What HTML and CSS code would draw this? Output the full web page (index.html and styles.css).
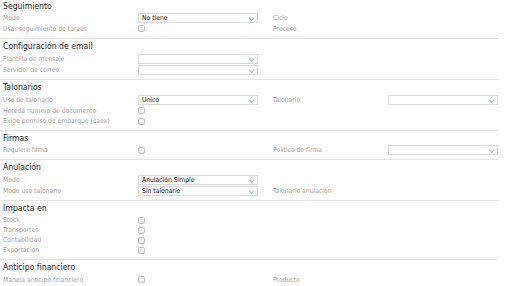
FILE: index.html
```html
<!DOCTYPE html>
<html lang="es">

<head>
    <meta charset="UTF-8" />
    <title>Configuración de documento</title>
    <link rel="stylesheet" href="styles.css">
</head>

<body>
    <div class="form">
        <!-- Seguimiento -->
        <div class="section first">
            <div class="section-title">Seguimiento</div>
            <div class="row">
                <span class="label">Modo</span>
                <div class="select">No tiene<span class="chevron"></span></div>
                <span></span>
                <span class="label">Ciclo</span>
            </div>
            <div class="row">
                <span class="label">Usar seguimiento de tareas</span>
                <span class="check"></span>
                <span></span>
                <span class="label">Proceso</span>
            </div>
        </div>

        <!-- Configuración de email -->
        <div class="section">
            <div class="section-title">Configuración de email</div>
            <div class="row">
                <span class="label">Plantilla de mensaje</span>
                <div class="select"><span class="chevron"></span></div>
            </div>
            <div class="row">
                <span class="label">Servidor de correo</span>
                <div class="select"><span class="chevron"></span></div>
            </div>
        </div>

        <!-- Talonarios -->
        <div class="section">
            <div class="section-title">Talonarios</div>
            <div class="row">
                <span class="label">Uso de talonario</span>
                <div class="select">Unico<span class="chevron"></span></div>
                <span></span>
                <span class="label">Talonario</span>
                <div class="select"><span class="chevron"></span></div>
            </div>
            <div class="row">
                <span class="label">Hereda numero de documento</span>
                <span class="check"></span>
            </div>
            <div class="row short">
                <span class="label">Exige permiso de embarque (caex)</span>
                <span class="check"></span>
            </div>
        </div>

        <!-- Firmas -->
        <div class="section">
            <div class="section-title">Firmas</div>
            <div class="row short">
                <span class="label">Requiere firma</span>
                <span class="check"></span>
                <span></span>
                <span class="label">Politica de firma</span>
                <div class="select"><span class="chevron"></span></div>
            </div>
        </div>

        <!-- Anulación -->
        <div class="section">
            <div class="section-title">Anulación</div>
            <div class="row">
                <span class="label">Modo</span>
                <div class="select">Anulación Simple<span class="chevron"></span></div>
            </div>
            <div class="row">
                <span class="label">Modo uso talonario</span>
                <div class="select">Sin talonario<span class="chevron"></span></div>
                <span></span>
                <span class="label">Talonario anulación</span>
            </div>
        </div>

        <!-- Impacta en -->
        <div class="section">
            <div class="section-title">Impacta en</div>
            <div class="row short">
                <span class="label">Stock</span>
                <span class="check"></span>
            </div>
            <div class="row short">
                <span class="label">Transportes</span>
                <span class="check"></span>
            </div>
            <div class="row short">
                <span class="label">Contabilidad</span>
                <span class="check"></span>
            </div>
            <div class="row short">
                <span class="label">Exportación</span>
                <span class="check"></span>
            </div>
        </div>

        <!-- Anticipo financiero -->
        <div class="section last">
            <div class="section-title">Anticipo financiero</div>
            <div class="row">
                <span class="label">Maneja anticipo financiero</span>
                <span class="check"></span>
                <span></span>
                <span class="label">Producto</span>
            </div>
        </div>
    </div>
</body>

</html>
```

FILE: styles.css
```css
html,
body {
    margin: 0;
    padding: 0;
    background: #fff;
    font-family: 'DejaVu Sans Condensed', 'DejaVu Sans', Verdana, sans-serif;
    font-stretch: condensed;
    overflow: hidden;
}

.form {
    width: 498px;
}

/* Bloques */
.section {
    padding: 1px 0 4px 0;
    border-bottom: 1px solid #e2e2e2;
}

.section.first {
    padding-top: 0;
}

.section.first .section-title {
    height: 12px;
    line-height: 12px;
}

.section.last {
    border-bottom: none;
}

.section-title {
    height: 13px;
    line-height: 13px;
    padding-left: 3px;
    font-size: 8.6px;
    color: #1e1e1e;
}

/* Filas */
.row {
    display: grid;
    grid-template-columns: 135px 120px 15px 115px 110px;
    align-items: center;
    height: 11px;
    padding-left: 3px;
}

.row.short {
    height: 10px;
}

.label {
    font-size: 6.75px;
    color: #a2a2a2;
    white-space: nowrap;
}

.select {
    position: relative;
    height: 10px;
    line-height: 8px;
    box-sizing: border-box;
    border: 1px solid #d9d9d9;
    padding-left: 3px;
    font-size: 6.75px;
    color: #111;
    background: #fff;
}

.chevron {
    position: absolute;
    right: 3.5px;
    top: 2px;
    width: 2.5px;
    height: 2.5px;
    border-right: 1px solid #8db4e0;
    border-bottom: 1px solid #8db4e0;
    transform: rotate(45deg);
}

.check {
    width: 7px;
    height: 7px;
    box-sizing: border-box;
    border: 1px solid #c2c2c2;
    border-radius: 2px;
    background: linear-gradient(#fbfbfb, #ebebeb);
}
```
